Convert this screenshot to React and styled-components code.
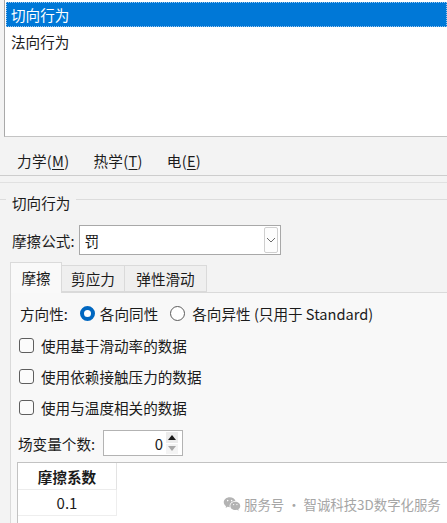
import React from "react";
import styled, { createGlobalStyle } from "styled-components";
import { RiWechatFill } from "react-icons/ri";

const Global = createGlobalStyle`
  html, body { margin: 0; padding: 0; background: #f3f3f3; }
  body { font-family: "Noto Sans CJK SC", "Noto Sans", sans-serif; color: #1b1b1b; }
  * { box-sizing: border-box; }
`;

const Page = styled.div`
  position: relative;
  width: 447px;
  height: 523px;
  overflow: hidden;
  background: #f3f3f3;
  font-size: 14.6px;
  display: flex;
  flex-direction: column;
`;

const ListBox = styled.div`
  margin-left: 4px;
  height: 137px;
  flex: none;
  background: #fff;
  border-left: 1px solid #a9a9a9;
  border-bottom: 1px solid #c4c4c4;
  padding-top: 2px;
  padding-left: 1px;
`;

const ListItem = styled.div`
  height: 25px;
  line-height: 25px;
  margin-bottom: 2px;
  padding-left: 5px;
  background: ${(p) => (p.$selected ? "#0078d7" : "transparent")};
  color: ${(p) => (p.$selected ? "#fff" : "#1b1b1b")};
  outline: ${(p) => (p.$selected ? "1px dotted #9cc8ef" : "none")};
  outline-offset: -1px;
`;

const MenuBar = styled.div`
  height: 39px;
  flex: none;
  display: flex;
  gap: 24px;
  padding: 14px 0 0 17px;
  background: #f3f3f3;
  border-bottom: 1px solid #cdcdcd;
`;

const MenuItem = styled.div`
  line-height: 20px;
  height: 20px;
  letter-spacing: 0.3px;
  u { text-decoration: underline; text-underline-offset: 2px; }
`;

const SubDivider = styled.div`
  height: 7px;
  flex: none;
  border-bottom: 1px solid #e1e1e1;
`;

const GroupHeader = styled.div`
  margin-top: 8px;
  height: 22px;
  display: flex;
  align-items: center;
  gap: 6px;
  &::before, &::after {
    content: "";
    height: 0;
    border-top: 1px solid #dcdcdc;
    margin-bottom: 6px;
  }
  &::before { width: 6px; }
  &::after { flex: 1; }
`;

const FormulaRow = styled.div`
  margin-top: 12px;
  height: 30px;
  display: flex;
  align-items: center;
  padding-left: 12px;
  gap: 5px;
`;

const Combo = styled.div`
  width: 202px;
  height: 30px;
  background: #fff;
  border: 1px solid #a8a8a8;
  display: flex;
  align-items: center;
  padding: 0 2px 0 4px;
`;

const ComboText = styled.span`
  flex: 1;
`;

const DropButton = styled.div`
  width: 14px;
  height: 26px;
  border: 1px solid #cfcfcf;
  border-radius: 2px;
  background: #fdfdfd;
  display: flex;
  align-items: center;
  justify-content: center;
`;

const TabStrip = styled.div`
  margin-top: 7px;
  height: 30px;
  display: flex;
  align-items: flex-end;
  padding-left: 10px;
  position: relative;
  z-index: 1;
`;

const Tab = styled.div`
  width: ${(p) => p.$w}px;
  height: ${(p) => (p.$active ? 31 : 27)}px;
  margin-bottom: ${(p) => (p.$active ? -1 : 0)}px;
  background: ${(p) => (p.$active ? "#f9f9f9" : "#efefef")};
  border: 1px solid #dadada;
  border-bottom: ${(p) => (p.$active ? "none" : "1px solid #dadada")};
  margin-left: ${(p) => (p.$first ? 0 : -1)}px;
  display: flex;
  align-items: center;
  justify-content: center;
  padding-bottom: ${(p) => (p.$active ? 2 : 0)}px;
`;

const Panel = styled.div`
  margin-left: 10px;
  flex: 1;
  background: #f8f8f8;
  border-top: 1px solid #dadada;
  border-left: 1px solid #dadada;
  display: flex;
  flex-direction: column;
  padding-top: 9px;
`;

const Row = styled.div`
  height: ${(p) => p.$h || 22}px;
  margin-top: ${(p) => p.$mt || 0}px;
  display: flex;
  align-items: center;
  padding-left: ${(p) => p.$pl || 8}px;
  flex: none;
`;

const Label = styled.span`
  margin-right: ${(p) => p.$mr || 0}px;
`;

const RadioOption = styled.label`
  display: flex;
  align-items: center;
  gap: ${(p) => p.$gap || 5}px;
  margin-right: 12px;
`;

const RadioDot = styled.span`
  width: 15px;
  height: 15px;
  border-radius: 50%;
  flex: none;
  ${(p) =>
    p.$checked
      ? `background: #fff; border: 4.5px solid #0067c0;`
      : `background: #fff; border: 1px solid #5b5b5b;`}
`;

const CheckOption = styled.label`
  display: flex;
  align-items: center;
  gap: 7px;
`;

const CheckBox = styled.span`
  width: 15px;
  height: 15px;
  border: 1px solid #5e5e5e;
  border-radius: 3px;
  background: #fbfbfb;
  flex: none;
`;

const Spinner = styled.div`
  width: 80px;
  height: 26px;
  background: #fff;
  border: 1px solid #b3b3b3;
  display: flex;
  align-items: center;
  padding-right: 4px;
`;

const SpinValue = styled.span`
  flex: 1;
  text-align: right;
  padding-right: 3px;
  font-size: 15px;
`;

const SpinButtons = styled.div`
  width: 12px;
  height: 22px;
  display: flex;
  flex-direction: column;
  gap: 1px;
`;

const SpinBtn = styled.div`
  flex: 1;
  background: ${(p) => (p.$up ? "#ececec" : "#f4f4f4")};
  display: flex;
  align-items: center;
  justify-content: center;
  &::after {
    content: "";
    border-left: 4px solid transparent;
    border-right: 4px solid transparent;
    ${(p) =>
      p.$up
        ? "border-bottom: 5px solid #1a1a1a;"
        : "border-top: 5px solid #a8a8a8;"}
  }
`;

const Table = styled.div`
  margin-top: 6px;
  margin-left: 6px;
  flex: 1;
  background: #fff;
  border-top: 1px solid #c2c2c2;
  border-left: 1px solid #c2c2c2;
`;

const TableCol = styled.div`
  width: 99px;
  display: flex;
  flex-direction: column;
`;

const HeadCell = styled.div`
  height: 27px;
  display: flex;
  align-items: center;
  justify-content: center;
  font-weight: 700;
  border-right: 1px solid #e3e3e3;
  border-bottom: 1px solid #ececec;
  background: #fff;
`;

const Cell = styled.div`
  height: 26px;
  display: flex;
  align-items: center;
  justify-content: center;
  font-size: 15px;
  border-right: 1px solid #eeeeee;
  border-bottom: 1px solid #eeeeee;
`;

const Watermark = styled.div`
  position: absolute;
  left: 223px;
  top: 494px;
  display: flex;
  align-items: center;
  gap: 3px;
  color: #a6a6a6;
  font-size: 13.4px;
  line-height: 20px;
`;

const Chevron = () => (
  <svg width="10" height="6" viewBox="0 0 10 6">
    <path d="M1 1 L5 5 L9 1" fill="none" stroke="#6b6b6b" strokeWidth="1" />
  </svg>
);

export default function App() {
  return (
    <>
      <Global />
      <Page>
        <ListBox>
          <ListItem $selected>切向行为</ListItem>
          <ListItem>法向行为</ListItem>
        </ListBox>
        <MenuBar>
          <MenuItem>力学(<u>M</u>)</MenuItem>
          <MenuItem>热学(<u>T</u>)</MenuItem>
          <MenuItem>电(<u>E</u>)</MenuItem>
        </MenuBar>
        <SubDivider />
        <GroupHeader>切向行为</GroupHeader>
        <FormulaRow>
          <Label>摩擦公式:</Label>
          <Combo>
            <ComboText>罚</ComboText>
            <DropButton>
              <Chevron />
            </DropButton>
          </Combo>
        </FormulaRow>
        <TabStrip>
          <Tab $active $first $w={52}>摩擦</Tab>
          <Tab $w={64}>剪应力</Tab>
          <Tab $w={83}>弹性滑动</Tab>
        </TabStrip>
        <Panel>
          <Row $pl={9}>
            <Label $mr={12}>方向性:</Label>
            <RadioOption $gap={5}>
              <RadioDot $checked />
              各向同性
            </RadioOption>
            <RadioOption $gap={7}>
              <RadioDot />
              各向异性 (只用于 Standard)
            </RadioOption>
          </Row>
          <Row $mt={10}>
            <CheckOption>
              <CheckBox />
              使用基于滑动率的数据
            </CheckOption>
          </Row>
          <Row $mt={9}>
            <CheckOption>
              <CheckBox />
              使用依赖接触压力的数据
            </CheckOption>
          </Row>
          <Row $mt={9}>
            <CheckOption>
              <CheckBox />
              使用与温度相关的数据
            </CheckOption>
          </Row>
          <Row $mt={12} $h={26} $pl={7}>
            <Label $mr={8}>场变量个数:</Label>
            <Spinner>
              <SpinValue>0</SpinValue>
              <SpinButtons>
                <SpinBtn $up />
                <SpinBtn />
              </SpinButtons>
            </Spinner>
          </Row>
          <Table>
            <TableCol>
              <HeadCell>摩擦系数</HeadCell>
              <Cell>0.1</Cell>
            </TableCol>
          </Table>
        </Panel>
        <Watermark>
          <RiWechatFill size={18} color="#b3b3b3" />
          服务号 · 智诚科技3D数字化服务
        </Watermark>
      </Page>
    </>
  );
}
